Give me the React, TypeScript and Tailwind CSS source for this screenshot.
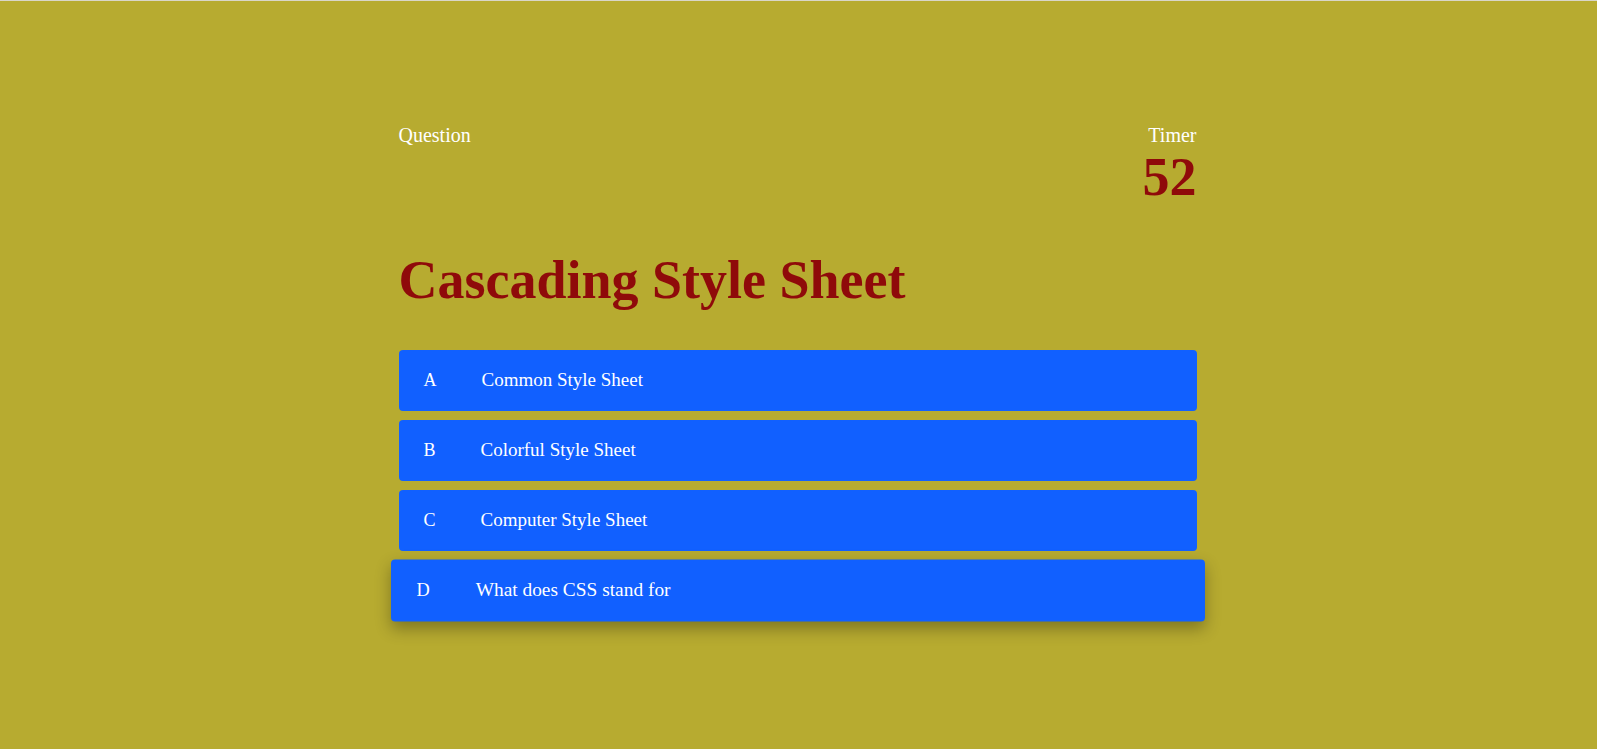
const options = [
  { letter: 'A', text: 'Common Style Sheet' },
  { letter: 'B', text: 'Colorful Style Sheet' },
  { letter: 'C', text: 'Computer Style Sheet' },
  { letter: 'D', text: 'What does CSS stand for', hover: true },
]

export default function App() {
  return (
    <div className="min-h-screen bg-[#b7ab30] border-t border-[#d9d6c8] font-['Liberation_Serif',serif] text-white pr-[2px]">
      <div className="w-[798px] mx-auto pt-[123px]">
        <div className="flex justify-between">
          <div className="text-[20px] leading-[22px]">Question</div>
          <div className="flex flex-col items-end">
            <div className="text-[20px] leading-[22px]">Timer</div>
            <div className="text-[54px] leading-[60px] font-bold text-[#8f0a0a] mt-[1px]">52</div>
          </div>
        </div>
        <h1 className="text-[54px] leading-[60px] font-bold text-[#8f0a0a] mt-[43px]">Cascading Style Sheet</h1>
        <div className="mt-[40px] flex flex-col gap-[9px]">
          {options.map((o) => (
            <div
              key={o.letter}
              className={
                'h-[61px] flex items-center pl-[25px] rounded-[4px] bg-[#1160ff] cursor-pointer ' +
                (o.hover ? 'scale-[1.02] shadow-[0_7px_16px_rgba(0,0,0,0.3)]' : '')
              }
            >
              <span className="text-[18px] mr-[45px]">{o.letter}</span>
              <span className="text-[19px]">{o.text}</span>
            </div>
          ))}
        </div>
      </div>
    </div>
  )
}
